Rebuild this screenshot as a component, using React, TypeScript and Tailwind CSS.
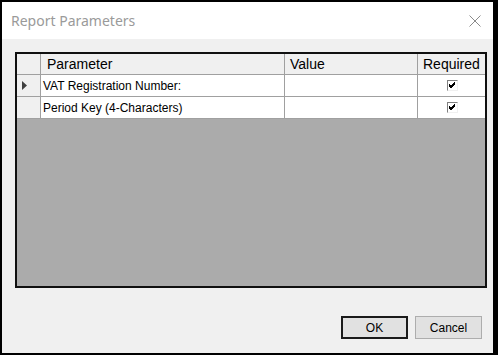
import React from "react";

const rows = [
  { name: "VAT Registration Number:", current: true },
  { name: "Period Key (4-Characters)", current: false },
];

function CheckMark() {
  return (
    <div className="w-[11px] h-[11px] border-t border-l border-[#808080] border-r border-b border-r-[#f0f0f0] border-b-[#f0f0f0] bg-white flex items-center justify-center">
      <svg width="7" height="7" viewBox="0 0 7 7">
        <path d="M0 2 L2 4 L6 0 M0 3 L2 5 L6 1 M0 4 L2 6 L6 2" stroke="#000" strokeWidth="1" fill="none" shapeRendering="crispEdges" />
      </svg>
    </div>
  );
}

export default function App() {
  return (
    <div
      className="w-[498px] h-[355px] bg-black pl-[2px] pt-[2px] pr-[5px] pb-[2px] flex flex-col"
      style={{ fontFamily: '"Liberation Sans", Arial, sans-serif' }}
    >
      <div className="h-[37px] bg-white flex items-center justify-between pl-[9px] pr-[12px]">
        <span className="text-[14px] text-[#9a9a9a]" style={{ fontFamily: '"Noto Sans", "Open Sans", sans-serif' }}>
          Report Parameters
        </span>
        <svg width="12" height="12" viewBox="0 0 12 12">
          <path d="M0.5 0.5 L11.5 11.5 M11.5 0.5 L0.5 11.5" stroke="#8a8a8a" strokeWidth="1" />
        </svg>
      </div>
      <div className="flex-1 bg-[#f0f0f0] flex flex-col pl-[13px] pr-[6px] pt-[13px]">
        <div className="h-[236px] border-2 border-[#101010] bg-[#ababab] flex flex-col">
          <div className="flex h-[21px] bg-[#f0f0f0] border-b border-[#a0a0a0] text-[14px] text-black">
            <div className="w-[24px] border-r border-[#a0a0a0]" />
            <div className="w-[244px] border-r border-[#a0a0a0] pl-[6px] flex items-center">Parameter</div>
            <div className="w-[133px] border-r border-[#a0a0a0] pl-[5px] flex items-center">Value</div>
            <div className="flex-1 pl-[5px] flex items-center whitespace-nowrap overflow-hidden">Required</div>
          </div>
          {rows.map((r) => (
            <div key={r.name} className="flex h-[22px] border-b border-[#a0a0a0] text-[12px] text-black">
              <div className="w-[24px] border-r border-[#a0a0a0] bg-[#f0f0f0] flex items-center pl-[5px]">
                {r.current && (
                  <svg width="5" height="9" viewBox="0 0 5 9">
                    <path d="M0 0 L5 4.5 L0 9 Z" fill="#404040" />
                  </svg>
                )}
              </div>
              <div className="w-[244px] border-r border-[#a0a0a0] bg-white pl-[2px] flex items-center">{r.name}</div>
              <div className="w-[133px] border-r border-[#a0a0a0] bg-white" />
              <div className="flex-1 bg-white flex items-center justify-center pl-[2px]">
                <CheckMark />
              </div>
            </div>
          ))}
        </div>
        <div className="flex justify-end gap-[7px] mt-[28px] pr-[5px]">
          <button className="w-[67px] h-[23px] border-2 border-[#1a1a1a] bg-[#e1e1e1] text-[12px] text-black flex items-center justify-center">
            OK
          </button>
          <button className="w-[67px] h-[23px] border border-[#adadad] bg-[#e1e1e1] text-[12px] text-black flex items-center justify-center">
            Cancel
          </button>
        </div>
      </div>
    </div>
  );
}
